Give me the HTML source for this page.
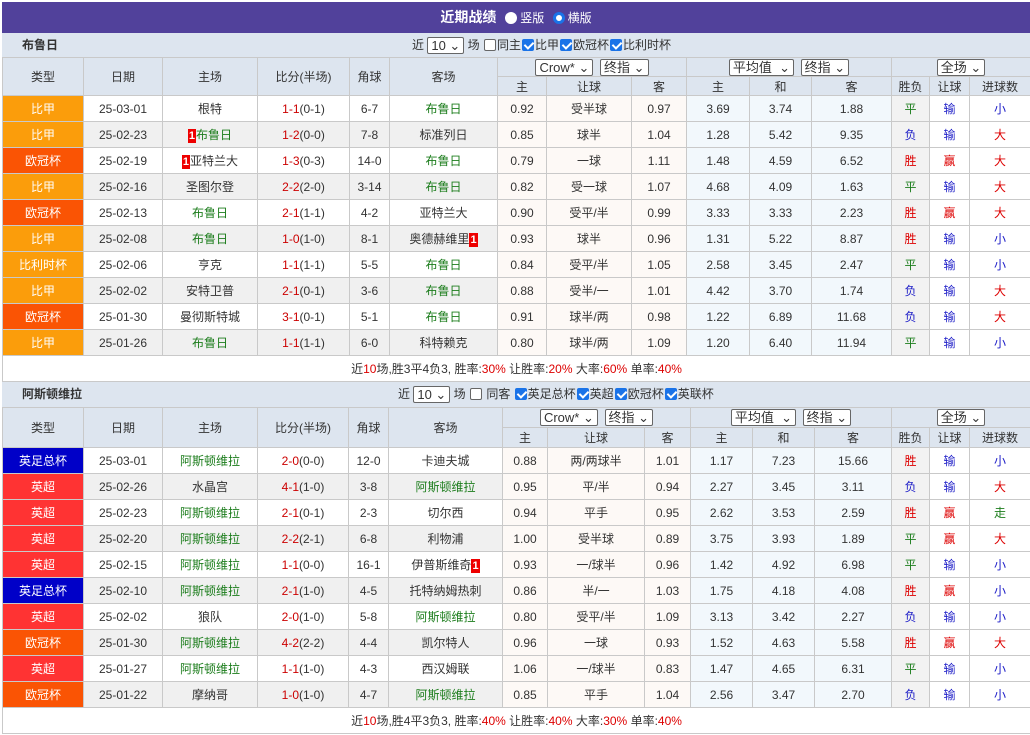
<!DOCTYPE html>
<html><head><meta charset="utf-8"><style>
*{box-sizing:border-box;margin:0;padding:0}
body{width:1030px;height:735px;background:#fff;font-family:"Liberation Sans","Noto Sans CJK SC",sans-serif;font-size:12px;color:#333;overflow:hidden;position:relative}
.title{position:absolute;left:2px;top:2px;width:1028px;height:31px;background:#51419b;color:#fff;text-align:center;line-height:31px;font-weight:bold;font-size:14px}
.title span{font-weight:normal;font-size:12px}
.rad{display:inline-block;width:12px;height:12px;border-radius:50%;background:#fff;vertical-align:-2px;margin:0 3px 0 5px}
.rad.on{border:3px solid #1a73e8}
.sec{position:absolute;left:2px;width:1028px;background:#dde5ef;height:25px;line-height:25px}
.sec b{position:absolute;left:20px;font-weight:bold}
.sec .f{position:absolute;}
.cb{display:inline-block;width:12px;height:12px;border:1px solid #666;border-radius:2px;background:#fff;vertical-align:-2px;margin:0 1px}
.cb.on{background:#1a73e8;border-color:#1a73e8;position:relative}
.cb.on:after{content:"";position:absolute;left:3px;top:0;width:4px;height:7px;border:solid #fff;border-width:0 2px 2px 0;transform:rotate(45deg)}
.sel{display:inline-block;border:1px solid #666;background:#fff;height:17px;line-height:15px;padding:0 3px;vertical-align:middle;font-size:13px;border-radius:2px}
table{position:absolute;left:2px;border-collapse:collapse;table-layout:fixed;width:1028px}
td{border:1px solid #c9c9c9;text-align:center;height:26px;white-space:nowrap;overflow:hidden}
tr.h td{background:#dde5ef;height:20px}
tr.h2 td{height:20px;background:#dde5ef}
.t1 tr.h td,.t1 tr.h2 td{height:19px}
.lg{color:#fff}
.bj{background:#fb9d0b}.oc{background:#fa5404}.en{background:#ff3333}.fa{background:#0000c8}
.g{color:#1c7d1c}.r{color:#d00}.b{color:#2020c8}
.a{background:#fdf9f6}.e{background:#f2f8fc}.s{background:#f2f2f2}
tr.z td.x{background:#f0f0f0}
.sc{color:#c00}
.rk{display:inline-block;background:#e00;color:#fff;font-size:11px;line-height:14px;padding:0 1px;font-weight:bold}
.sum{text-align:center;background:#fff}
</style></head><body>
<div class="title">近期战绩 <span><i class="rad"></i>竖版 <i class="rad on"></i>横版</span></div>

<div class="sec" style="top:33px"><b>布鲁日</b><span class="f" style="left:410px">近 <span class="sel">10 ⌄</span> 场 <i class="cb"></i>同主<i class="cb on"></i>比甲<i class="cb on"></i>欧冠杯<i class="cb on"></i>比利时杯</span></div>
<table class="t1" style="top:57px">
<colgroup><col width="81"><col width="79"><col width="95"><col width="92"><col width="40"><col width="108"><col width="49"><col width="85"><col width="55"><col width="63"><col width="62"><col width="80"><col width="38"><col width="40"><col width="61"></colgroup>
<tr class="h"><td rowspan="2">类型</td><td rowspan="2">日期</td><td rowspan="2">主场</td><td rowspan="2">比分(半场)</td><td rowspan="2">角球</td><td rowspan="2">客场</td><td colspan="3"><span class="sel">Crow* ⌄</span> &nbsp;<span class="sel">终指 ⌄</span></td><td colspan="3"><span class="sel">平均值 &nbsp;⌄</span> &nbsp;<span class="sel">终指 ⌄</span></td><td colspan="3"><span class="sel">全场 ⌄</span></td></tr>
<tr class="h2"><td>主</td><td>让球</td><td>客</td><td>主</td><td>和</td><td>客</td><td>胜负</td><td>让球</td><td>进球数</td></tr>
<tr><td class="lg bj">比甲</td><td class="x">25-03-01</td><td class="x">根特</td><td class="x"><span class="sc">1-1</span>(0-1)</td><td class="x">6-7</td><td class="x g">布鲁日</td><td class="a">0.92</td><td class="a">受半球</td><td class="a">0.97</td><td class="e">3.69</td><td class="e">3.74</td><td class="e">1.88</td><td class="s g">平</td><td class="b">输</td><td class="b">小</td></tr>
<tr class="z"><td class="lg bj">比甲</td><td class="x">25-02-23</td><td class="x"><span class="rk">1</span><span class="g">布鲁日</span></td><td class="x"><span class="sc">1-2</span>(0-0)</td><td class="x">7-8</td><td class="x">标准列日</td><td class="a">0.85</td><td class="a">球半</td><td class="a">1.04</td><td class="e">1.28</td><td class="e">5.42</td><td class="e">9.35</td><td class="s b">负</td><td class="b">输</td><td class="r">大</td></tr>
<tr><td class="lg oc">欧冠杯</td><td class="x">25-02-19</td><td class="x"><span class="rk">1</span>亚特兰大</td><td class="x"><span class="sc">1-3</span>(0-3)</td><td class="x">14-0</td><td class="x g">布鲁日</td><td class="a">0.79</td><td class="a">一球</td><td class="a">1.11</td><td class="e">1.48</td><td class="e">4.59</td><td class="e">6.52</td><td class="s r">胜</td><td class="r">赢</td><td class="r">大</td></tr>
<tr class="z"><td class="lg bj">比甲</td><td class="x">25-02-16</td><td class="x">圣图尔登</td><td class="x"><span class="sc">2-2</span>(2-0)</td><td class="x">3-14</td><td class="x g">布鲁日</td><td class="a">0.82</td><td class="a">受一球</td><td class="a">1.07</td><td class="e">4.68</td><td class="e">4.09</td><td class="e">1.63</td><td class="s g">平</td><td class="b">输</td><td class="r">大</td></tr>
<tr><td class="lg oc">欧冠杯</td><td class="x">25-02-13</td><td class="x g">布鲁日</td><td class="x"><span class="sc">2-1</span>(1-1)</td><td class="x">4-2</td><td class="x">亚特兰大</td><td class="a">0.90</td><td class="a">受平/半</td><td class="a">0.99</td><td class="e">3.33</td><td class="e">3.33</td><td class="e">2.23</td><td class="s r">胜</td><td class="r">赢</td><td class="r">大</td></tr>
<tr class="z"><td class="lg bj">比甲</td><td class="x">25-02-08</td><td class="x g">布鲁日</td><td class="x"><span class="sc">1-0</span>(1-0)</td><td class="x">8-1</td><td class="x">奥德赫维里<span class="rk">1</span></td><td class="a">0.93</td><td class="a">球半</td><td class="a">0.96</td><td class="e">1.31</td><td class="e">5.22</td><td class="e">8.87</td><td class="s r">胜</td><td class="b">输</td><td class="b">小</td></tr>
<tr><td class="lg bj">比利时杯</td><td class="x">25-02-06</td><td class="x">亨克</td><td class="x"><span class="sc">1-1</span>(1-1)</td><td class="x">5-5</td><td class="x g">布鲁日</td><td class="a">0.84</td><td class="a">受平/半</td><td class="a">1.05</td><td class="e">2.58</td><td class="e">3.45</td><td class="e">2.47</td><td class="s g">平</td><td class="b">输</td><td class="b">小</td></tr>
<tr class="z"><td class="lg bj">比甲</td><td class="x">25-02-02</td><td class="x">安特卫普</td><td class="x"><span class="sc">2-1</span>(0-1)</td><td class="x">3-6</td><td class="x g">布鲁日</td><td class="a">0.88</td><td class="a">受半/一</td><td class="a">1.01</td><td class="e">4.42</td><td class="e">3.70</td><td class="e">1.74</td><td class="s b">负</td><td class="b">输</td><td class="r">大</td></tr>
<tr><td class="lg oc">欧冠杯</td><td class="x">25-01-30</td><td class="x">曼彻斯特城</td><td class="x"><span class="sc">3-1</span>(0-1)</td><td class="x">5-1</td><td class="x g">布鲁日</td><td class="a">0.91</td><td class="a">球半/两</td><td class="a">0.98</td><td class="e">1.22</td><td class="e">6.89</td><td class="e">11.68</td><td class="s b">负</td><td class="b">输</td><td class="r">大</td></tr>
<tr class="z"><td class="lg bj">比甲</td><td class="x">25-01-26</td><td class="x g">布鲁日</td><td class="x"><span class="sc">1-1</span>(1-1)</td><td class="x">6-0</td><td class="x">科特赖克</td><td class="a">0.80</td><td class="a">球半/两</td><td class="a">1.09</td><td class="e">1.20</td><td class="e">6.40</td><td class="e">11.94</td><td class="s g">平</td><td class="b">输</td><td class="b">小</td></tr>
<tr><td colspan="15" class="sum">近<span class="r">10</span>场,胜3平4负3, 胜率:<span class="r">30%</span> 让胜率:<span class="r">20%</span> 大率:<span class="r">60%</span> 单率:<span class="r">40%</span></td></tr>
</table>

<div class="sec" style="top:382px"><b>阿斯顿维拉</b><span class="f" style="left:396px">近 <span class="sel">10 ⌄</span> 场 <i class="cb"></i> 同客 <i class="cb on"></i>英足总杯<i class="cb on"></i>英超<i class="cb on"></i>欧冠杯<i class="cb on"></i>英联杯</span></div>
<table style="top:407px">
<colgroup><col width="81"><col width="79"><col width="95"><col width="91"><col width="40"><col width="114"><col width="45"><col width="97"><col width="46"><col width="62"><col width="62"><col width="77"><col width="38"><col width="40"><col width="61"></colgroup>
<tr class="h"><td rowspan="2">类型</td><td rowspan="2">日期</td><td rowspan="2">主场</td><td rowspan="2">比分(半场)</td><td rowspan="2">角球</td><td rowspan="2">客场</td><td colspan="3"><span class="sel">Crow* ⌄</span> &nbsp;<span class="sel">终指 ⌄</span></td><td colspan="3"><span class="sel">平均值 &nbsp;⌄</span> &nbsp;<span class="sel">终指 ⌄</span></td><td colspan="3"><span class="sel">全场 ⌄</span></td></tr>
<tr class="h2"><td>主</td><td>让球</td><td>客</td><td>主</td><td>和</td><td>客</td><td>胜负</td><td>让球</td><td>进球数</td></tr>
<tr><td class="lg fa">英足总杯</td><td class="x">25-03-01</td><td class="x g">阿斯顿维拉</td><td class="x"><span class="sc">2-0</span>(0-0)</td><td class="x">12-0</td><td class="x">卡迪夫城</td><td class="a">0.88</td><td class="a">两/两球半</td><td class="a">1.01</td><td class="e">1.17</td><td class="e">7.23</td><td class="e">15.66</td><td class="s r">胜</td><td class="b">输</td><td class="b">小</td></tr>
<tr class="z"><td class="lg en">英超</td><td class="x">25-02-26</td><td class="x">水晶宫</td><td class="x"><span class="sc">4-1</span>(1-0)</td><td class="x">3-8</td><td class="x g">阿斯顿维拉</td><td class="a">0.95</td><td class="a">平/半</td><td class="a">0.94</td><td class="e">2.27</td><td class="e">3.45</td><td class="e">3.11</td><td class="s b">负</td><td class="b">输</td><td class="r">大</td></tr>
<tr><td class="lg en">英超</td><td class="x">25-02-23</td><td class="x g">阿斯顿维拉</td><td class="x"><span class="sc">2-1</span>(0-1)</td><td class="x">2-3</td><td class="x">切尔西</td><td class="a">0.94</td><td class="a">平手</td><td class="a">0.95</td><td class="e">2.62</td><td class="e">3.53</td><td class="e">2.59</td><td class="s r">胜</td><td class="r">赢</td><td class="g">走</td></tr>
<tr class="z"><td class="lg en">英超</td><td class="x">25-02-20</td><td class="x g">阿斯顿维拉</td><td class="x"><span class="sc">2-2</span>(2-1)</td><td class="x">6-8</td><td class="x">利物浦</td><td class="a">1.00</td><td class="a">受半球</td><td class="a">0.89</td><td class="e">3.75</td><td class="e">3.93</td><td class="e">1.89</td><td class="s g">平</td><td class="r">赢</td><td class="r">大</td></tr>
<tr><td class="lg en">英超</td><td class="x">25-02-15</td><td class="x g">阿斯顿维拉</td><td class="x"><span class="sc">1-1</span>(0-0)</td><td class="x">16-1</td><td class="x">伊普斯维奇<span class="rk">1</span></td><td class="a">0.93</td><td class="a">一/球半</td><td class="a">0.96</td><td class="e">1.42</td><td class="e">4.92</td><td class="e">6.98</td><td class="s g">平</td><td class="b">输</td><td class="b">小</td></tr>
<tr class="z"><td class="lg fa">英足总杯</td><td class="x">25-02-10</td><td class="x g">阿斯顿维拉</td><td class="x"><span class="sc">2-1</span>(1-0)</td><td class="x">4-5</td><td class="x">托特纳姆热刺</td><td class="a">0.86</td><td class="a">半/一</td><td class="a">1.03</td><td class="e">1.75</td><td class="e">4.18</td><td class="e">4.08</td><td class="s r">胜</td><td class="r">赢</td><td class="b">小</td></tr>
<tr><td class="lg en">英超</td><td class="x">25-02-02</td><td class="x">狼队</td><td class="x"><span class="sc">2-0</span>(1-0)</td><td class="x">5-8</td><td class="x g">阿斯顿维拉</td><td class="a">0.80</td><td class="a">受平/半</td><td class="a">1.09</td><td class="e">3.13</td><td class="e">3.42</td><td class="e">2.27</td><td class="s b">负</td><td class="b">输</td><td class="b">小</td></tr>
<tr class="z"><td class="lg oc">欧冠杯</td><td class="x">25-01-30</td><td class="x g">阿斯顿维拉</td><td class="x"><span class="sc">4-2</span>(2-2)</td><td class="x">4-4</td><td class="x">凯尔特人</td><td class="a">0.96</td><td class="a">一球</td><td class="a">0.93</td><td class="e">1.52</td><td class="e">4.63</td><td class="e">5.58</td><td class="s r">胜</td><td class="r">赢</td><td class="r">大</td></tr>
<tr><td class="lg en">英超</td><td class="x">25-01-27</td><td class="x g">阿斯顿维拉</td><td class="x"><span class="sc">1-1</span>(1-0)</td><td class="x">4-3</td><td class="x">西汉姆联</td><td class="a">1.06</td><td class="a">一/球半</td><td class="a">0.83</td><td class="e">1.47</td><td class="e">4.65</td><td class="e">6.31</td><td class="s g">平</td><td class="b">输</td><td class="b">小</td></tr>
<tr class="z"><td class="lg oc">欧冠杯</td><td class="x">25-01-22</td><td class="x">摩纳哥</td><td class="x"><span class="sc">1-0</span>(1-0)</td><td class="x">4-7</td><td class="x g">阿斯顿维拉</td><td class="a">0.85</td><td class="a">平手</td><td class="a">1.04</td><td class="e">2.56</td><td class="e">3.47</td><td class="e">2.70</td><td class="s b">负</td><td class="b">输</td><td class="b">小</td></tr>
<tr><td colspan="15" class="sum">近<span class="r">10</span>场,胜4平3负3, 胜率:<span class="r">40%</span> 让胜率:<span class="r">40%</span> 大率:<span class="r">30%</span> 单率:<span class="r">40%</span></td></tr>
</table>
</body></html>
